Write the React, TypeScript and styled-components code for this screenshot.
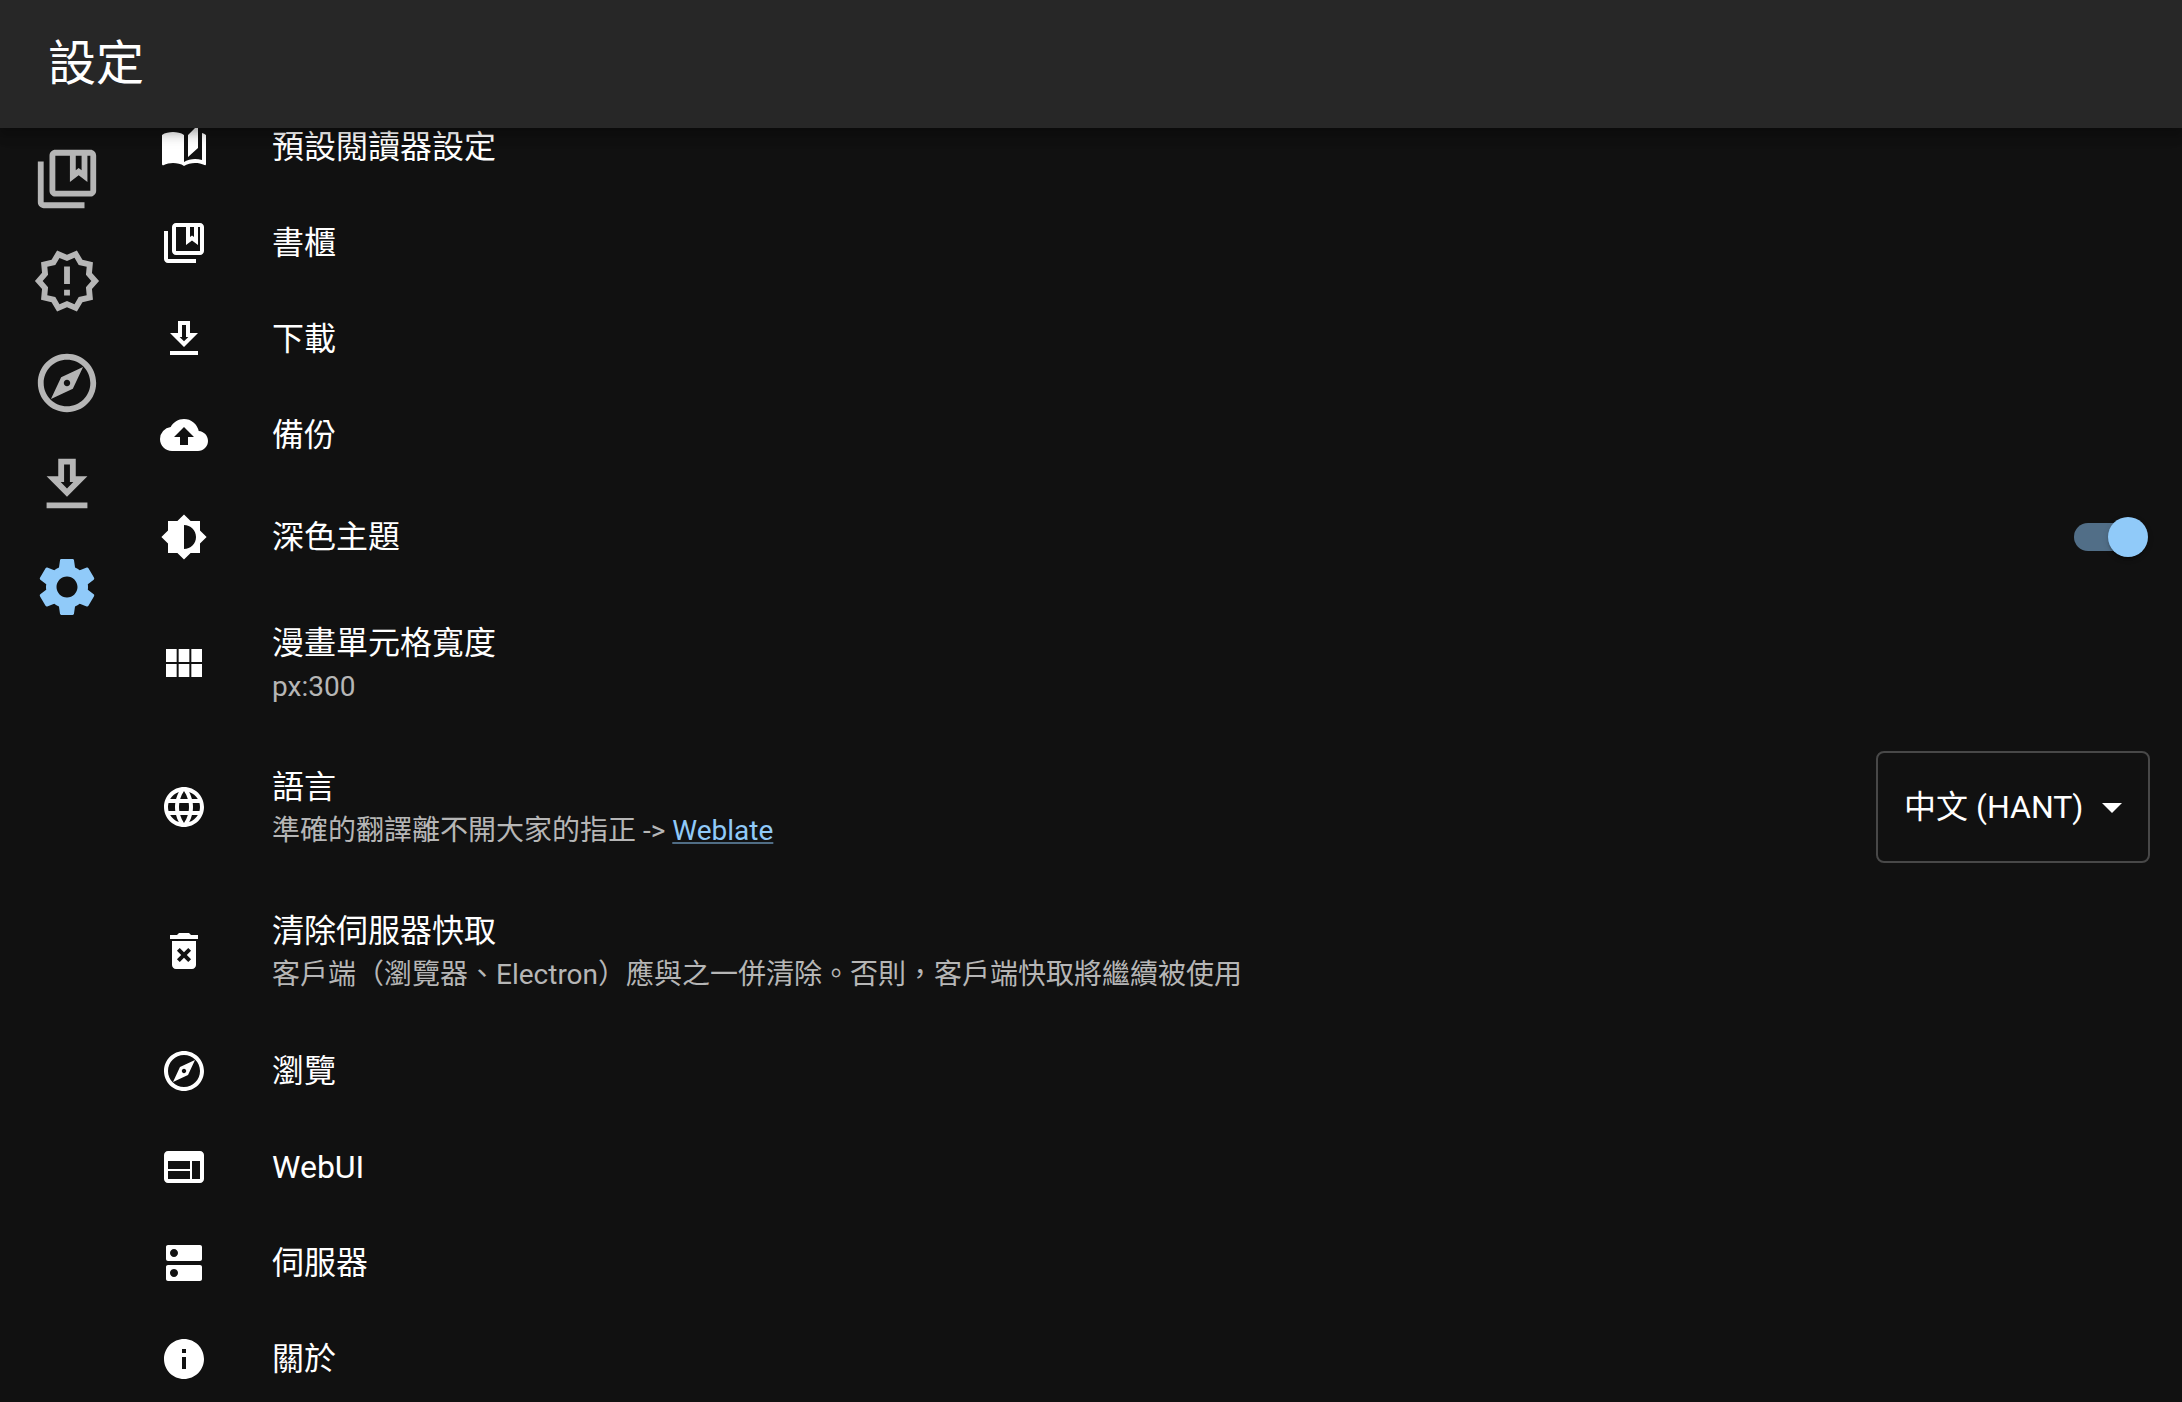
import React, { useState } from 'react';
import styled, { createGlobalStyle } from 'styled-components';
import type { IconType } from 'react-icons';
import {
  MdArrowDropDown,
  MdAutoStories,
  MdBackup,
  MdBrightness6,
  MdDeleteForever,
  MdDns,
  MdInfo,
  MdLanguage,
  MdOutlineCollectionsBookmark,
  MdOutlineExplore,
  MdOutlineGetApp,
  MdOutlineNewReleases,
  MdSettings,
  MdWeb,
} from 'react-icons/md';

const color = {
  page: '#111111',
  bar: '#272727',
  text: '#ffffff',
  muted: '#b6b6b6',
  primary: '#90caf9',
  track: '#516e87',
  outline: '#484848',
};

const GlobalStyle = createGlobalStyle`
  *, *::before, *::after { box-sizing: border-box; }
  body {
    margin: 0;
    overflow: hidden;
    background: ${color.page};
    color: ${color.text};
    font-family: Roboto, "Noto Sans CJK TC", sans-serif;
    font-size: 32px;
    line-height: 48px;
  }
`;

const Shell = styled.div`
  display: flex;
  flex-direction: column;
  height: 100vh;
`;

const AppBar = styled.header`
  position: relative;
  z-index: 1;
  flex: none;
  display: flex;
  align-items: center;
  height: 128px;
  padding: 0 48px;
  background: ${color.bar};
  box-shadow:
    0 4px 8px -2px rgba(0, 0, 0, 0.2),
    0 8px 10px rgba(0, 0, 0, 0.14),
    0 2px 20px rgba(0, 0, 0, 0.12);
`;

const Title = styled.h1`
  margin: 0;
  font-size: 48px;
  line-height: 64px;
  font-weight: 400;
`;

const Body = styled.div`
  flex: 1;
  min-height: 0;
  display: flex;
  overflow: hidden;
`;

const SideNav = styled.nav`
  flex: none;
  display: flex;
  flex-direction: column;
  padding: 0 26px 0 32px;
`;

const NavLink = styled.a<{ $active?: boolean }>`
  display: flex;
  padding: 16px 0;
  color: ${(p) => (p.$active ? color.primary : color.muted)};

  svg {
    width: 70px;
    height: 70px;
  }
`;

/* The list is scrolled, so its first row is partly under the app bar. */
const SettingsList = styled.ul`
  flex: 1;
  min-width: 0;
  margin: -29px 0 0;
  padding: 0;
  list-style: none;
`;

const rowLayout = `
  display: flex;
  align-items: center;
  width: 100%;
  padding: 16px 32px;
  color: inherit;
  text-align: left;
  text-decoration: none;
`;

const RowLink = styled.a`
  ${rowLayout}
`;

const RowButton = styled.button`
  ${rowLayout}
  border: 0;
  background: none;
  font: inherit;
  cursor: pointer;
`;

const Row = styled.div`
  ${rowLayout}
`;

const IconSlot = styled.span`
  flex: none;
  display: flex;
  width: 112px;

  svg {
    width: 48px;
    height: 48px;
  }
`;

const RowText = styled.span<{ $double?: boolean }>`
  flex: 1;
  min-width: 0;
  display: flex;
  flex-direction: column;
  margin: ${(p) => (p.$double ? '12px' : '8px')} 0;
`;

const Secondary = styled.span`
  font-size: 28px;
  line-height: 40px;
  color: ${color.muted};
`;

const TextLink = styled.a`
  color: ${color.primary};
  text-decoration: underline;
  text-decoration-color: rgba(144, 202, 249, 0.5);
`;

const SwitchBox = styled.span`
  display: flex;
  align-items: center;
  height: 76px;
  padding-right: 8px;
`;

const Switch = styled.input`
  appearance: none;
  display: flex;
  align-items: center;
  width: 68px;
  height: 28px;
  margin: 0;
  border-radius: 14px;
  background: #4d4d4d;
  cursor: pointer;

  &::before {
    content: '';
    flex: none;
    width: 40px;
    height: 40px;
    margin-left: -6px;
    border-radius: 50%;
    background: #e0e0e0;
    box-shadow:
      0 4px 2px -2px rgba(0, 0, 0, 0.2),
      0 2px 2px rgba(0, 0, 0, 0.14),
      0 2px 6px rgba(0, 0, 0, 0.12);
  }

  &:checked {
    background: ${color.track};
  }

  &:checked::before {
    margin-left: 34px;
    background: ${color.primary};
  }
`;

const SelectBox = styled.span`
  flex: none;
  display: grid;
  align-items: center;

  > * {
    grid-area: 1 / 1;
  }

  svg {
    justify-self: end;
    width: 48px;
    height: 48px;
    margin-right: 14px;
    pointer-events: none;
  }
`;

const Select = styled.select`
  appearance: none;
  width: 274px;
  height: 112px;
  padding: 0 64px 0 26px;
  border: 2px solid ${color.outline};
  border-radius: 8px;
  background: transparent;
  color: inherit;
  font: inherit;
`;

function ViewModuleIcon() {
  return (
    <svg viewBox="0 0 24 24" fill="currentColor" aria-hidden="true">
      <path d="M14.67 5v6.5H9.33V5h5.34zm1 6.5H21V5h-5.33v6.5zm-1 7.5v-6.5H9.33V19h5.34zm1-6.5V19H21v-6.5h-5.33zm-7.34 0H3V19h5.33v-6.5zm0-1V5H3v6.5h5.33z" />
    </svg>
  );
}

const navItems: { icon: IconType; label: string; active?: boolean }[] = [
  { icon: MdOutlineCollectionsBookmark, label: '書櫃' },
  { icon: MdOutlineNewReleases, label: '更新' },
  { icon: MdOutlineExplore, label: '瀏覽' },
  { icon: MdOutlineGetApp, label: '下載' },
  { icon: MdSettings, label: '設定', active: true },
];

type LinkItem = { icon: IconType; label: string };

const readingLinks: LinkItem[] = [
  { icon: MdAutoStories, label: '預設閱讀器設定' },
  { icon: MdOutlineCollectionsBookmark, label: '書櫃' },
  { icon: MdOutlineGetApp, label: '下載' },
  { icon: MdBackup, label: '備份' },
];

const systemLinks: LinkItem[] = [
  { icon: MdOutlineExplore, label: '瀏覽' },
  { icon: MdWeb, label: 'WebUI' },
  { icon: MdDns, label: '伺服器' },
  { icon: MdInfo, label: '關於' },
];

function LinkRow({ icon: Icon, label }: LinkItem) {
  return (
    <li>
      <RowLink href="#">
        <IconSlot><Icon /></IconSlot>
        <RowText>{label}</RowText>
      </RowLink>
    </li>
  );
}

export default function App() {
  const [dark, setDark] = useState(true);

  return (
    <>
      <GlobalStyle />
      <Shell lang="zh-Hant">
        <AppBar>
          <Title>設定</Title>
        </AppBar>
        <Body>
          <SideNav>
            {navItems.map(({ icon: Icon, label, active }) => (
              <NavLink key={label} href="#" aria-label={label} $active={active}>
                <Icon />
              </NavLink>
            ))}
          </SideNav>
          <SettingsList>
            {readingLinks.map((item) => (
              <LinkRow key={item.label} {...item} />
            ))}
            <li>
              <Row>
                <IconSlot><MdBrightness6 /></IconSlot>
                <RowText>
                  <label htmlFor="dark-theme">深色主題</label>
                </RowText>
                <SwitchBox>
                  <Switch
                    id="dark-theme"
                    type="checkbox"
                    role="switch"
                    checked={dark}
                    onChange={(e) => setDark(e.target.checked)}
                  />
                </SwitchBox>
              </Row>
            </li>
            <li>
              <RowButton type="button">
                <IconSlot><ViewModuleIcon /></IconSlot>
                <RowText $double>
                  <span>漫畫單元格寬度</span>
                  <Secondary>px:300</Secondary>
                </RowText>
              </RowButton>
            </li>
            <li>
              <Row>
                <IconSlot><MdLanguage /></IconSlot>
                <RowText $double>
                  <label htmlFor="language">語言</label>
                  <Secondary>
                    準確的翻譯離不開大家的指正 -&gt; <TextLink href="#">Weblate</TextLink>
                  </Secondary>
                </RowText>
                <SelectBox>
                  <Select id="language" defaultValue="zh-Hant">
                    <option value="zh-Hant">中文 (HANT)</option>
                  </Select>
                  <MdArrowDropDown />
                </SelectBox>
              </Row>
            </li>
            <li>
              <RowButton type="button">
                <IconSlot><MdDeleteForever /></IconSlot>
                <RowText $double>
                  <span>清除伺服器快取</span>
                  <Secondary>
                    客戶端（瀏覽器、Electron）應與之一併清除。否則，客戶端快取將繼續被使用
                  </Secondary>
                </RowText>
              </RowButton>
            </li>
            {systemLinks.map((item) => (
              <LinkRow key={item.label} {...item} />
            ))}
          </SettingsList>
        </Body>
      </Shell>
    </>
  );
}
